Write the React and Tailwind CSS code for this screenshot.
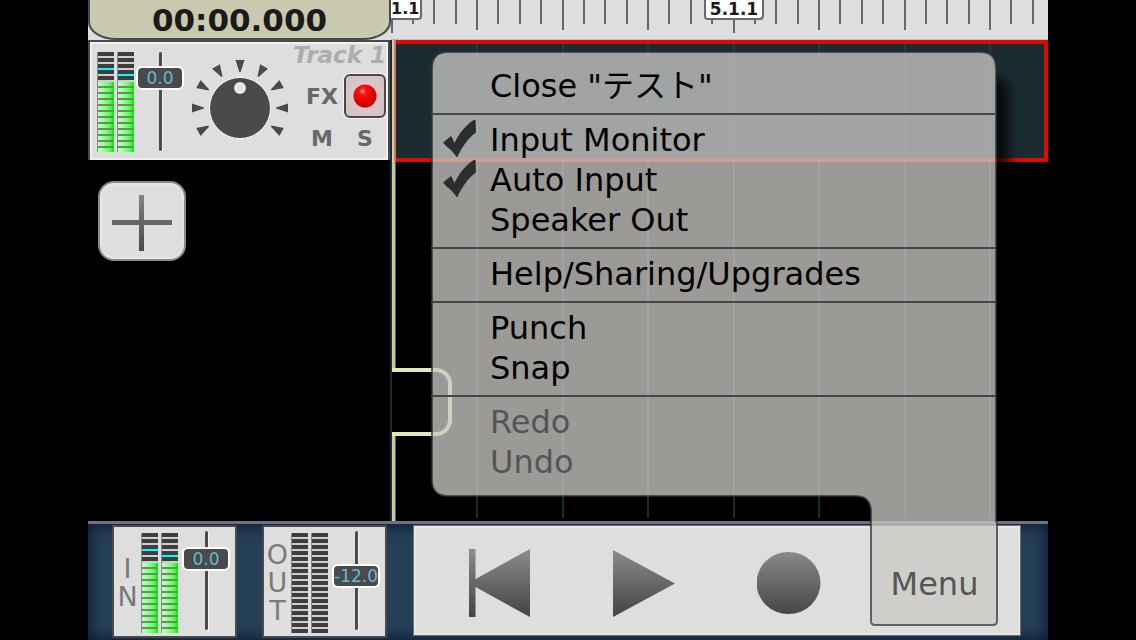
import { useState } from 'react'

const RULER_STEP = 21.375
const BAR_STEP = 85.5
const TICKS = Array.from({ length: 80 }, (_, i) => i)
const BARS = Array.from({ length: 20 }, (_, i) => i + 1)
const SEGMENTS = Array.from({ length: 17 }, (_, i) => i)
const KNOB_ANGLES = [-120, -90, -60, -30, 0, 30, 60, 90, 120]

const MENU_GROUPS = [
  [{ label: 'Close "テスト"' }],
  [
    { label: 'Input Monitor', checked: true },
    { label: 'Auto Input', checked: true },
    { label: 'Speaker Out', checked: false },
  ],
  [{ label: 'Help/Sharing/Upgrades' }],
  [{ label: 'Punch' }, { label: 'Snap' }],
  [
    { label: 'Redo', disabled: true },
    { label: 'Undo', disabled: true },
  ],
]

// level = number of dark segments at the top, peak = segment above the cyan mark
function Meter({ level, peak }) {
  return (
    <div className="w-[17px] flex flex-col border-l border-[#8a8a8a]">
      {SEGMENTS.map(i => {
        const lit = i >= level
        return (
          <div key={i}>
            <div className={lit ? 'h-1 bg-linear-to-r from-[#c0ffc0] to-[#00ff00] to-90%' : 'h-1 bg-[#3e3e3e]'} />
            {i < 16 && (
              <div className={i === peak ? 'h-0.5 bg-[#00ffff]' : lit ? 'h-0.5 bg-[#6a8a6a]' : 'h-0.5 bg-[#cfcfcf]'} />
            )}
          </div>
        )
      })}
    </div>
  )
}

function Meters({ levels, peaks }) {
  return (
    <div className="flex items-start gap-[3px]">
      <Meter level={levels[0]} peak={peaks[0]} />
      <Meter level={levels[1]} peak={peaks[1]} />
    </div>
  )
}

function Fader({ label, initial, top }) {
  const [value, setValue] = useState(initial)

  return (
    <label className="relative w-12 h-[99px] flex justify-center">
      <span className="w-[3px] h-full rounded-full bg-[#4a4a4a] shadow-[1px_1px_0_#f4f4f4]" />
      <span
        className="absolute left-0 w-12 h-6 rounded-md border-2 border-white bg-[#4a4a4a] text-[17px] leading-5 text-center text-[#68b8d0]"
        style={{ top }}
      >
        {value.toFixed(1)}
      </span>
      <input
        type="range"
        aria-label={label}
        min={-60}
        max={6}
        step={0.1}
        value={value}
        onChange={e => setValue(Number(e.target.value))}
        className="absolute inset-0 w-full h-full opacity-0 [writing-mode:vertical-lr] [direction:rtl]"
      />
    </label>
  )
}

function PanKnob() {
  const [pan, setPan] = useState(0)

  return (
    <label className="relative block w-25 h-20">
      <svg viewBox="-50 -49 100 80" className="block w-full h-full">
        {KNOB_ANGLES.map(a => (
          <path key={a} d="M-4.5 -48 H4.5 L0.6 -36 H-0.6 Z" fill="#4a4a4a" transform={`rotate(${a})`} />
        ))}
        <circle r="31" fill="#f4f4f4" />
        <circle r="30" fill="#4a4a4a" />
        <circle cy="-20" r="6" fill="#e6e6e6" transform={`rotate(${pan * 1.2})`} />
      </svg>
      <input
        type="range"
        aria-label="Pan"
        min={-100}
        max={100}
        value={pan}
        onChange={e => setPan(Number(e.target.value))}
        className="absolute inset-0 w-full h-full opacity-0"
      />
    </label>
  )
}

function Header() {
  return (
    <header className="h-10 flex bg-[#dedede]">
      <div className="w-[303px] h-10 shrink-0 rounded-b-[28px_18px] border-2 border-t-0 border-[#4a4a4a] bg-[#c9c9ae] text-center text-[31px] leading-10 font-bold text-[#1a1a1a]">
        00:00.000
      </div>
      <div className="relative flex-1 border-b border-[#b8bcc0]">
        <svg className="block w-full h-full" shapeRendering="crispEdges">
          {TICKS.map(i => {
            const h = i % 16 === 0 ? 33 : i % 4 === 0 ? 30 : 24
            return <rect key={i} x={Math.floor(i * RULER_STEP)} y="0" width="2" height={h} fill="#686868" />
          })}
        </svg>
        <span className="absolute left-0 top-0 h-5 w-[31px] rounded-br-sm border-r-2 border-b-2 border-[#6a6a6a] bg-white text-base leading-[18px] font-bold text-[#1a1a1a] whitespace-nowrap">
          1.1
        </span>
        <span className="absolute left-[313px] top-0 h-5 w-[60px] rounded-b-sm border-2 border-t-0 border-[#6a6a6a] bg-white text-center text-[17px] leading-[18px] font-bold text-[#1a1a1a]">
          5.1.1
        </span>
      </div>
    </header>
  )
}

function TrackStrip() {
  return (
    <section className="h-30 flex border-2 border-b-0 border-[#4a4a4a] bg-[#dedede] shadow-[inset_0_0_0_2px_#efefef]">
      <div className="flex pl-[7px] pt-2.5">
        <Meters levels={[5, 5]} peaks={[2, 3]} />
      </div>
      <div className="pl-0.5 pt-2.5">
        <Fader label="Track 1 volume" initial={0} top={14} />
      </div>
      <div className="pl-1.5 pt-[17px]">
        <PanKnob />
      </div>
      <div className="flex-1 flex flex-col items-end pr-0.5 pt-px">
        <h2 className="text-[23px] leading-6 font-bold italic text-[#adadad] whitespace-nowrap">Track 1</h2>
        <div className="grid grid-cols-[44px_42px] pt-[7px] items-center justify-items-center text-[22px] font-bold text-[#686868] [text-shadow:0_2px_0_#f6f6f6]">
          <button className="h-11">FX</button>
          <button
            aria-label="Record arm"
            className="h-11 w-[42px] rounded-md border-2 border-[#4a4a4a] bg-radial from-[#f0c8c8] to-[#c6c4c4] flex items-center justify-center shadow-[0_0_0_1px_#f6f6f6]"
          >
            <svg viewBox="0 0 24 24" className="size-6">
              <defs>
                <radialGradient id="rec" cx="0.4" cy="0.3" r="0.6">
                  <stop offset="0" stopColor="#ffb0b0" />
                  <stop offset="0.25" stopColor="#ff1010" />
                  <stop offset="1" stopColor="#cc0000" />
                </radialGradient>
              </defs>
              <circle cx="12" cy="12" r="11.5" fill="url(#rec)" />
            </svg>
          </button>
          <button className="h-10">M</button>
          <button className="h-10">S</button>
        </div>
      </div>
    </section>
  )
}

function Timeline() {
  return (
    <main className="relative flex-1 flex">
      <svg className="absolute inset-0 w-full h-full" shapeRendering="crispEdges">
        {BARS.map(i => (
          <rect key={i} x={Math.floor(i * BAR_STEP) - 1} y="0" width="2" height="478" fill="#182e36" />
        ))}
      </svg>
      {/* edit cursor with the loop handle */}
      <div className="relative z-10 w-1 flex flex-col">
        <div className="h-[122px] border-l-2 border-[#dccfa4] border-r-2 border-r-[#c87a60]" />
        <div className="h-[206px] border-l-[3px] border-[#c9c99c] border-r border-r-[#5e5e48]" />
        <div className="h-[68px] w-[60px] rounded-r-2xl border-4 border-l-0 border-[#e2e8b4]" />
        <div className="flex-1 border-l-[3px] border-[#c9c99c] border-r border-r-[#5e5e48]" />
      </div>
      <div className="relative flex-1 h-[122px] border-4 border-l-0 border-[#de0a00] bg-[#1a2c32]">
        <svg className="block w-full h-full" shapeRendering="crispEdges">
          {BARS.map(i => (
            <rect key={i} x={Math.floor(i * BAR_STEP) - 5} y="0" width="2" height="114" fill="#243a40" />
          ))}
        </svg>
      </div>
    </main>
  )
}

function LevelPanel({ name, levels, peaks, value, top }) {
  return (
    <section className="w-[125px] flex border-2 border-[#4a4a4a] bg-[#dedede]">
      <h2 className="w-[27px] pt-0.5 flex flex-col justify-center text-center text-[27px] leading-7 text-[#7a7a7a]">
        {name.split('').map(c => (
          <span key={c}>{c}</span>
        ))}
      </h2>
      <div className="pt-1.5">
        <Meters levels={levels} peaks={peaks} />
      </div>
      <div className="pl-1 pt-1">
        <Fader label={name + ' level'} initial={value} top={top} />
      </div>
    </section>
  )
}

function IconFill() {
  return (
    <svg className="absolute size-0">
      <defs>
        <linearGradient id="metal" gradientUnits="userSpaceOnUse" x1="0" y1="0" x2="0" y2="68">
          <stop offset="0" stopColor="#8c8c8c" />
          <stop offset="1" stopColor="#444444" />
        </linearGradient>
      </defs>
    </svg>
  )
}

function Transport() {
  return (
    <footer className="h-[119px] flex border-t-[3px] border-[#6e7380] bg-[#243f56] pl-6 pr-[27px] shadow-[inset_0_0_14px_2px_#0c1a36]">
      <div className="flex gap-[25px] pt-px pb-0.5">
        <LevelPanel name="IN" levels={[5, 5]} peaks={[2, 3]} value={0} top={16} />
        <LevelPanel name="OUT" levels={[17, 17]} peaks={[-1, -1]} value={-12} top={33} />
      </div>
      <div className="flex-1 ml-[26px] mt-px mb-1 flex items-center gap-[82px] pl-[55px] pt-1 border border-[#707070] bg-[#dedede] shadow-[inset_0_0_0_2px_#e6e6e6]">
        <button aria-label="Rewind">
          <svg viewBox="0 0 62 68" className="w-[62px] h-[68px]">
            <path d="M0 0 H6.5 V30 L61 0 V68 L6.5 38 V68 H0 Z" fill="url(#metal)" />
          </svg>
        </button>
        <button aria-label="Play">
          <svg viewBox="0 0 62 68" className="w-[62px] h-[68px]">
            <path d="M0 1 L62 34.5 L0 68 Z" fill="url(#metal)" />
          </svg>
        </button>
        <button aria-label="Record">
          <svg viewBox="0 0 64 68" className="w-16 h-[68px]">
            <ellipse cx="31.5" cy="34" rx="32" ry="31" fill="url(#metal)" />
          </svg>
        </button>
      </div>
    </footer>
  )
}

function CheckMark() {
  return (
    <svg viewBox="0 0 34 40" className="w-[34px] h-10">
      <path
        d="M0 22.5 L8 16 Q10 19 11.5 23 C16 14 22 5 32.5 -1 L33 12.5 C25 18 19 27 14 37.5 Q9 30 4 27 Z"
        fill="#2b2e2e"
      />
    </svg>
  )
}

function MenuItem({ item }) {
  const [on, setOn] = useState(item.checked)
  return (
    <button
      disabled={item.disabled}
      onClick={() => item.checked !== undefined && setOn(!on)}
      className="h-10 w-full flex items-center text-left text-black disabled:text-[#555555]"
    >
      <span className="w-[59px] pl-3">{on && <CheckMark />}</span>
      <span>{item.label}</span>
    </button>
  )
}

function MenuPopup() {
  return (
    <nav className="absolute right-[50px] bottom-3.5 z-20 w-[567px] h-[575px] flex flex-col text-[32px] leading-10">
      <svg viewBox="0 0 567 575" className="absolute inset-0 w-full h-full overflow-visible">
        <defs>
          <clipPath id="outside">
            <rect x="566" y="0" width="60" height="460" />
          </clipPath>
        </defs>
        <g clipPath="url(#outside)">
          <rect x="500" y="26" width="78" height="430" rx="16" fill="#000" fillOpacity="0.75" className="blur-[6px]" />
        </g>
        <path
          d="M17 1 H549 Q565 1 565 17 V470 L566 472 V570 Q566 574 562 574 H444 Q440 574 440 570 V461 Q440 445 424 445 H17 Q1 445 1 429 V17 Q1 1 17 1 Z"
          fill="#cac8c4"
          fillOpacity="0.77"
          stroke="#2c3030"
          strokeOpacity="0.7"
          strokeWidth="2"
        />
      </svg>
      <div className="relative pt-2.5 mr-0.5">
        {MENU_GROUPS.map((group, i) => (
          <div key={i} className="pt-[5px] pb-[7px] border-b-2 border-[#444646] last:border-b-0">
            {group.map(item => (
              <MenuItem key={item.label} item={item} />
            ))}
          </div>
        ))}
      </div>
      <button className="relative mt-auto self-end w-[127px] h-21 text-[#555555]">Menu</button>
    </nav>
  )
}

export default function App() {
  return (
    <div className="min-h-screen flex bg-black px-22 font-['DejaVu_Sans','Noto_Sans_CJK_JP',sans-serif]">
      <IconFill />
      <div className="relative flex-1 flex flex-col">
        <Header />
        <div className="flex-1 flex">
          <aside className="w-[304px] border-r-2 border-[#1a2c32]">
            <TrackStrip />
            <button
              aria-label="Add track"
              className="mt-[21px] ml-2.5 w-22 h-20 rounded-2xl border-2 border-[#8a8a8a] bg-[#dedede] flex items-center justify-center shadow-[inset_0_0_0_2px_#e6e6e6]"
            >
              <svg viewBox="0 0 60 68" className="w-[60px] h-[68px]">
                <path d="M27 8 H32 V33 H60 V38 H32 V64 H27 V38 H0 V33 H27 Z" fill="url(#metal)" />
              </svg>
            </button>
          </aside>
          <Timeline />
        </div>
        <Transport />
        <MenuPopup />
      </div>
    </div>
  )
}
